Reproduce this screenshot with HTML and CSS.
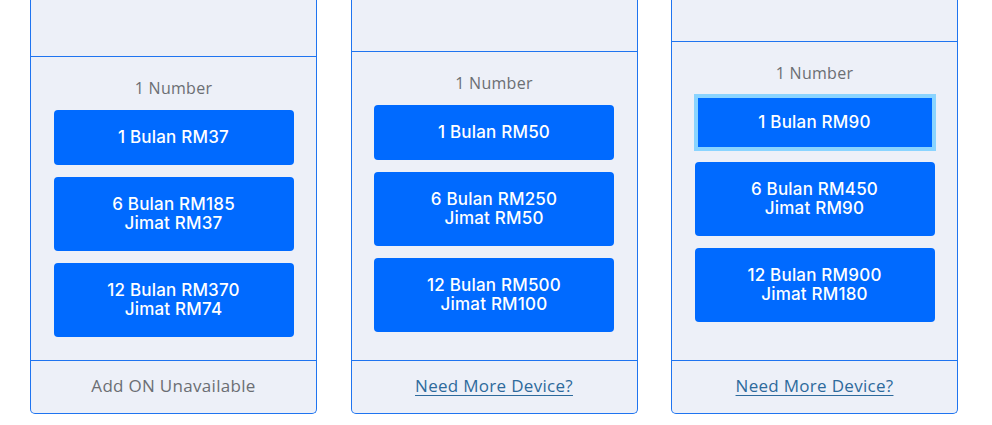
FILE: index.html
```html
<!DOCTYPE html>
<html lang="ms">
<head>
<meta charset="utf-8">
<title>Plans</title>
<link rel="stylesheet" href="styles.css">
</head>
<body>
<div class="plans">
  <div class="card">
    <div class="card-head head-a"></div>
    <div class="card-body">
      <div class="qty">1 Number</div>
      <button class="opt">1 Bulan RM37</button>
      <button class="opt">6 Bulan RM185<br>Jimat RM37</button>
      <button class="opt">12 Bulan RM370<br>Jimat RM74</button>
    </div>
    <div class="card-foot"><span class="muted">Add ON Unavailable</span></div>
  </div>
  <div class="card">
    <div class="card-head head-b"></div>
    <div class="card-body">
      <div class="qty">1 Number</div>
      <button class="opt">1 Bulan RM50</button>
      <button class="opt">6 Bulan RM250<br>Jimat RM50</button>
      <button class="opt">12 Bulan RM500<br>Jimat RM100</button>
    </div>
    <div class="card-foot"><a class="more" href="#">Need More Device?</a></div>
  </div>
  <div class="card">
    <div class="card-head head-c"></div>
    <div class="card-body">
      <div class="qty">1 Number</div>
      <button class="opt focused">1 Bulan RM90</button>
      <button class="opt">6 Bulan RM450<br>Jimat RM90</button>
      <button class="opt">12 Bulan RM900<br>Jimat RM180</button>
    </div>
    <div class="card-foot"><a class="more" href="#">Need More Device?</a></div>
  </div>
</div>
</body>
</html>
```
FILE: styles.css
```css
* { box-sizing: border-box; }
html, body { margin: 0; padding: 0; background: #ffffff; overflow: hidden; }
body { font-family: "Open Sans", "Noto Sans", sans-serif; }

.plans {
  display: grid;
  grid-template-columns: 287px 287px 287px;
  column-gap: 33.5px;
  padding-left: 30px;
  margin-top: -8px;
}

.card {
  display: flex;
  flex-direction: column;
  background: #edf0f8;
  border: 1px solid #1f74f0;
  border-top: 0;
  border-radius: 0 0 5px 5px;
}

.card-head { border-bottom: 1px solid #1f74f0; }
.head-a { height: 65px; }
.head-b { height: 60px; }
.head-c { height: 50px; }

.card-body {
  flex: 1;
  display: flex;
  flex-direction: column;
  align-items: center;
  padding: 19px 22px 23px;
}

.qty {
  font-size: 16px;
  letter-spacing: 0.3px;
  line-height: 24px;
  color: #6b6e73;
  margin-bottom: 10px;
}

.opt {
  display: block;
  width: 240px;
  margin: 0 0 12px;
  padding: 18px 10px;
  border: 0;
  border-radius: 4px;
  background: #006aff;
  color: #ffffff;
  font-family: "Inter", "Noto Sans", sans-serif;
  font-weight: 500;
  font-size: 17px;
  letter-spacing: 0.2px;
  line-height: 19px;
  text-align: center;
}
.opt:last-child { margin-bottom: 0; }
.opt.focused {
  border-radius: 0;
  box-shadow: 0 0 0 1px #8ad4ff, inset 0 0 0 3px #8ad4ff;
}

.card-foot {
  border-top: 1px solid #1f74f0;
  height: 53px;
  padding-bottom: 3px;
  display: flex;
  align-items: center;
  justify-content: center;
  font-size: 17px;
  letter-spacing: 0.3px;
}
.muted { color: #6b6e73; }
.more { color: #2d6a9c; text-decoration: underline; text-underline-offset: 3px; }
```
